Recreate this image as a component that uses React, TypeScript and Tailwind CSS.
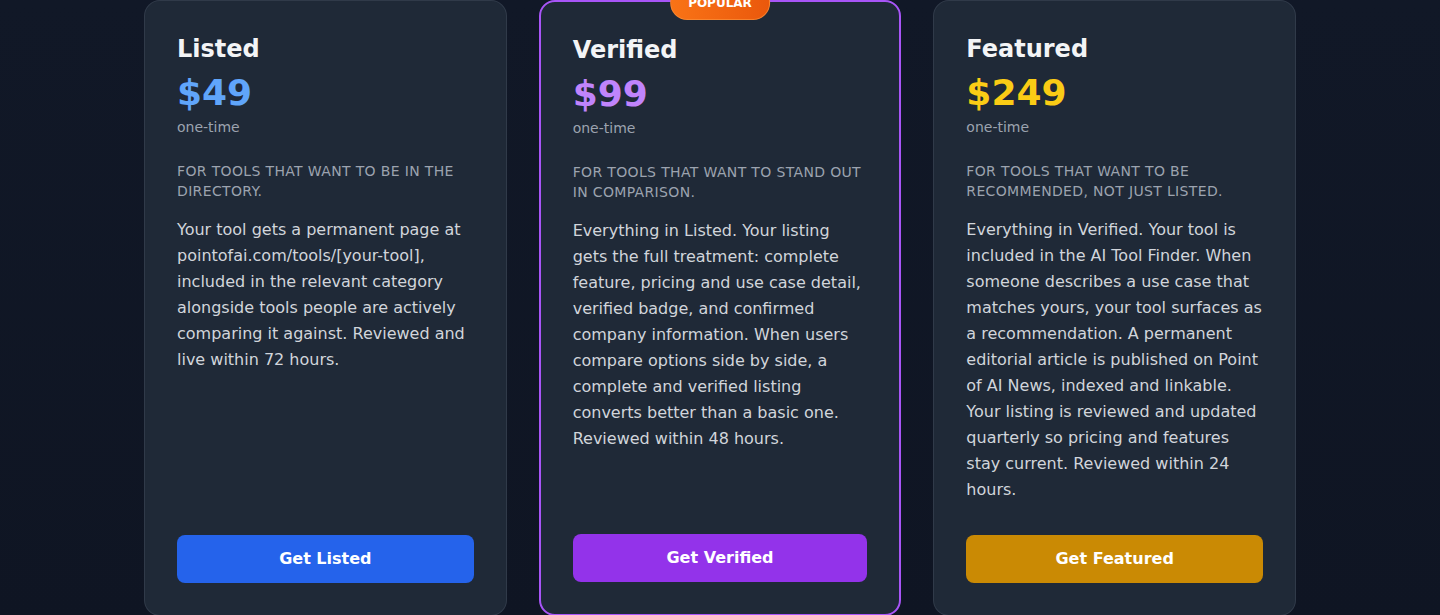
const PLANS = [
  {
    name: "Listed",
    price: "$49",
    priceColor: "text-[#60a5fa]",
    tagline: "For tools that want to be in the directory.",
    body: "Your tool gets a permanent page at pointofai.com/tools/[your-tool], included in the relevant category alongside tools people are actively comparing it against. Reviewed and live within 72 hours.",
    cta: "Get Listed",
    button: "bg-[#2563eb] hover:bg-[#1d4ed8]",
    popular: false,
  },
  {
    name: "Verified",
    price: "$99",
    priceColor: "text-[#c084fc]",
    tagline: "For tools that want to stand out in comparison.",
    body: "Everything in Listed. Your listing gets the full treatment: complete feature, pricing and use case detail, verified badge, and confirmed company information. When users compare options side by side, a complete and verified listing converts better than a basic one. Reviewed within 48 hours.",
    cta: "Get Verified",
    button: "bg-[#9333ea] hover:bg-[#7e22ce]",
    popular: true,
  },
  {
    name: "Featured",
    price: "$249",
    priceColor: "text-[#facc15]",
    tagline: "For tools that want to be recommended, not just listed.",
    body: "Everything in Verified. Your tool is included in the AI Tool Finder. When someone describes a use case that matches yours, your tool surfaces as a recommendation. A permanent editorial article is published on Point of AI News, indexed and linkable. Your listing is reviewed and updated quarterly so pricing and features stay current. Reviewed within 24 hours.",
    cta: "Get Featured",
    button: "bg-[#ca8a04] hover:bg-[#a16207]",
    popular: false,
  },
];

export default function App() {
  return (
    <div
      className="min-h-screen bg-gradient-to-b from-[#111827] to-[#0f1523] overflow-hidden"
      style={{ fontFamily: '"DejaVu Sans", Verdana, sans-serif' }}
    >
      <div className="max-w-6xl mx-auto grid grid-cols-3 gap-8">
        {PLANS.map((p) => (
          <div
            key={p.name}
            className={`relative flex flex-col bg-[#1f2937] rounded-2xl p-8 ${
              p.popular ? "border-2 border-[#a855f7]" : "border border-[#374151]/70"
            }`}
          >
            {p.popular && (
              <div className="absolute -top-4 left-1/2 -translate-x-1/2 rounded-full bg-gradient-to-r from-[#f97316] to-[#ea580c] border border-[#fb923c]/70 px-[17px] py-2 text-xs leading-4 font-bold text-white">
                POPULAR
              </div>
            )}
            {/* Plan header */}
            <div className="flex-1">
              <h3 className="text-2xl font-bold text-[#f3f4f6]">{p.name}</h3>
              <div className={`mt-2 text-4xl font-bold ${p.priceColor}`}>{p.price}</div>
              <div className="mt-1 text-sm text-[#9ca3af]">one-time</div>
              <p className="mt-6 text-sm uppercase tracking-wide text-[#9ca3af]">{p.tagline}</p>
              <p className="mt-4 text-base leading-relaxed text-[#d1d5db]">{p.body}</p>
            </div>
            <button className={`mt-8 w-full rounded-lg py-3 text-base font-bold text-white transition-colors ${p.button}`}>
              {p.cta}
            </button>
          </div>
        ))}
      </div>
    </div>
  );
}
